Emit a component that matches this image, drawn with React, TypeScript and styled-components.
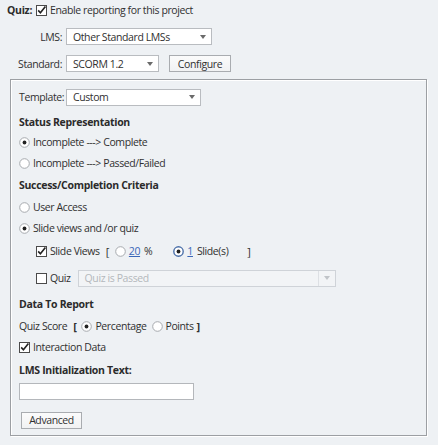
import React from "react";
import styled, { createGlobalStyle } from "styled-components";

const Global = createGlobalStyle`
  html, body { margin: 0; padding: 0; background: #eef1f4; }
  body {
    font-family: "Open Sans", "Noto Sans", sans-serif;
    font-size: 10.5px;
    letter-spacing: -0.4px;
    color: #303030;
  }
`;

const Page = styled.div`
  width: 438px;
  height: 445px;
  background: #eef1f4;
  display: flex;
  flex-direction: column;
`;

const Row = styled.div<{ $h?: number; $mt?: number; $pl?: number }>`
  display: flex;
  align-items: center;
  height: ${(p) => p.$h ?? 20}px;
  margin-top: ${(p) => p.$mt ?? 0}px;
  padding-left: ${(p) => p.$pl ?? 0}px;
  white-space: nowrap;
`;

const Bold = styled.span<{ $mr?: number }>`
  font-weight: 700;
  letter-spacing: -0.3px;
  color: #2b2b2b;
  margin-right: ${(p) => p.$mr ?? 0}px;
`;

const Label = styled.span<{ $w?: number; $right?: boolean }>`
  display: inline-block;
  width: ${(p) => (p.$w ? `${p.$w}px` : "auto")};
  text-align: ${(p) => (p.$right ? "right" : "left")};
  margin-right: 4px;
`;

const Select = styled.div<{ $w: number; $disabled?: boolean }>`
  width: ${(p) => p.$w}px;
  height: 17px;
  box-sizing: border-box;
  border: 1px solid ${(p) => (p.$disabled ? "#cfd3d8" : "#b9bcc0")};
  background: ${(p) => (p.$disabled ? "#f2f4f6" : "#ffffff")};
  color: ${(p) => (p.$disabled ? "#b4b8bc" : "#303030")};
  display: flex;
  align-items: center;
  padding-left: 6px;
  position: relative;
`;

const Arrow = styled.span<{ $sep?: boolean }>`
  position: absolute;
  right: 0;
  top: 0;
  bottom: 0;
  width: 16px;
  display: flex;
  align-items: center;
  justify-content: center;
  border-left: ${(p) => (p.$sep ? "1px solid #dde0e4" : "none")};
  &::after {
    content: "";
    border-left: 3px solid transparent;
    border-right: 3px solid transparent;
    border-top: 4px solid ${(p) => (p.$sep ? "#c0c4c8" : "#6a6a6a")};
  }
`;

const Button = styled.div<{ $w: number }>`
  width: ${(p) => p.$w}px;
  height: 17px;
  box-sizing: border-box;
  border: 1px solid #a9acb0;
  background: linear-gradient(#fbfbfb, #f1f2f3);
  display: flex;
  align-items: center;
  justify-content: center;
  color: #303030;
`;

const Panel = styled.div`
  margin: 6px 0 0 10px;
  width: 417px;
  height: 357px;
  box-sizing: border-box;
  border: 1px solid #9c9fa3;
  box-shadow: 1px 1px 0 #ffffff, inset 1px 1px 0 #ffffff;
  padding: 7px 0 0 8px;
  display: flex;
  flex-direction: column;
`;

const Box = styled.span`
  width: 11px;
  height: 11px;
  margin-right: 3px;
  display: inline-flex;
  flex-shrink: 0;
`;

const Check = ({ on }: { on: boolean }) => (
  <Box>
    <svg width="11" height="11" viewBox="0 0 11 11">
      <rect x="0.5" y="0.5" width="10" height="10" fill="#fff" stroke="#4a4a4a" />
      {on && <path d="M2.2 5.4 L4.4 7.8 L9.4 1.6" fill="none" stroke="#222" strokeWidth="1.6" />}
    </svg>
  </Box>
);

const RadioBox = styled.span`
  width: 11px;
  height: 11px;
  margin-right: 3px;
  display: inline-flex;
  flex-shrink: 0;
`;

const Radio = ({ on, focus }: { on: boolean; focus?: boolean }) => (
  <RadioBox>
    <svg width="11" height="11" viewBox="0 0 11 11">
      <circle
        cx="5.5"
        cy="5.5"
        r={focus ? 4.7 : 4.8}
        fill="#fff"
        stroke={focus ? "#4a6fa8" : "#a6aaae"}
        strokeWidth={focus ? 1.4 : 1}
      />
      {on && <circle cx="5.5" cy="5.5" r="1.9" fill="#222" />}
    </svg>
  </RadioBox>
);

const Link = styled.span`
  color: #3a66b8;
  text-decoration: underline;
  margin-right: 4px;
`;

const Gap = styled.span<{ $w: number }>`
  display: inline-block;
  width: ${(p) => p.$w}px;
`;

const Bracket = styled.span<{ $bold?: boolean }>`
  font-weight: ${(p) => (p.$bold ? 700 : 400)};
  font-size: 11px;
`;

const TextInput = styled.div`
  width: 175px;
  height: 17px;
  box-sizing: border-box;
  border: 1px solid #b4b7bb;
  background: #fff;
`;

export default function App() {
  return (
    <Page>
      <Global />
      <Row $h={20} $pl={7}>
        <Bold $mr={4}>Quiz:</Bold>
        <Check on />
        <span>Enable reporting for this project</span>
      </Row>
      <Row $h={19} $mt={7}>
        <Label $w={62} $right>LMS:</Label>
        <Select $w={146}>
          Other Standard LMSs
          <Arrow />
        </Select>
      </Row>
      <Row $h={19} $mt={8}>
        <Label $w={62} $right>Standard:</Label>
        <Select $w={93}>
          SCORM 1.2
          <Arrow />
        </Select>
        <Gap $w={10} />
        <Button $w={62}>Configure</Button>
      </Row>
      <Panel>
        <Row>
          <Label $w={43}>Template:</Label>
          <Select $w={135}>
            Custom
            <Arrow />
          </Select>
        </Row>
        <Row $mt={5}>
          <Bold>Status Representation</Bold>
        </Row>
        <Row>
          <Radio on />
          <span>Incomplete ---&gt; Complete</span>
        </Row>
        <Row $mt={1}>
          <Radio on={false} />
          <span>Incomplete ---&gt; Passed/Failed</span>
        </Row>
        <Row $mt={2}>
          <Bold>Success/Completion Criteria</Bold>
        </Row>
        <Row $mt={2}>
          <Radio on={false} />
          <span>User Access</span>
        </Row>
        <Row $mt={1}>
          <Radio on />
          <span>Slide views and /or quiz</span>
        </Row>
        <Row $mt={3} $pl={17}>
          <Check on />
          <span>Slide Views</span>
          <Gap $w={6} />
          <Bracket>[</Bracket>
          <Gap $w={6} />
          <Radio on={false} />
          <Link>20</Link>
          <span>%</span>
          <Gap $w={21} />
          <Radio on focus />
          <Link>1</Link>
          <span>Slide(s)</span>
          <Gap $w={19} />
          <Bracket>]</Bracket>
        </Row>
        <Row $mt={7} $pl={17}>
          <Check on={false} />
          <span>Quiz</span>
          <Gap $w={7} />
          <Select $w={258} $disabled>
            Quiz is Passed
            <Arrow $sep />
          </Select>
        </Row>
        <Row $mt={6}>
          <Bold>Data To Report</Bold>
        </Row>
        <Row $mt={2}>
          <span>Quiz Score</span>
          <Gap $w={6} />
          <Bracket $bold>[</Bracket>
          <Gap $w={5} />
          <Radio on />
          <span>Percentage</span>
          <Gap $w={5} />
          <Radio on={false} />
          <span>Points</span>
          <Gap $w={3} />
          <Bracket $bold>]</Bracket>
        </Row>
        <Row $mt={1}>
          <Check on />
          <span>Interaction Data</span>
        </Row>
        <Row $mt={3}>
          <Bold>LMS Initialization Text:</Bold>
        </Row>
        <Row $mt={1}>
          <TextInput />
        </Row>
        <Row $mt={9} $pl={2}>
          <Button $w={61}>Advanced</Button>
        </Row>
      </Panel>
    </Page>
  );
}
